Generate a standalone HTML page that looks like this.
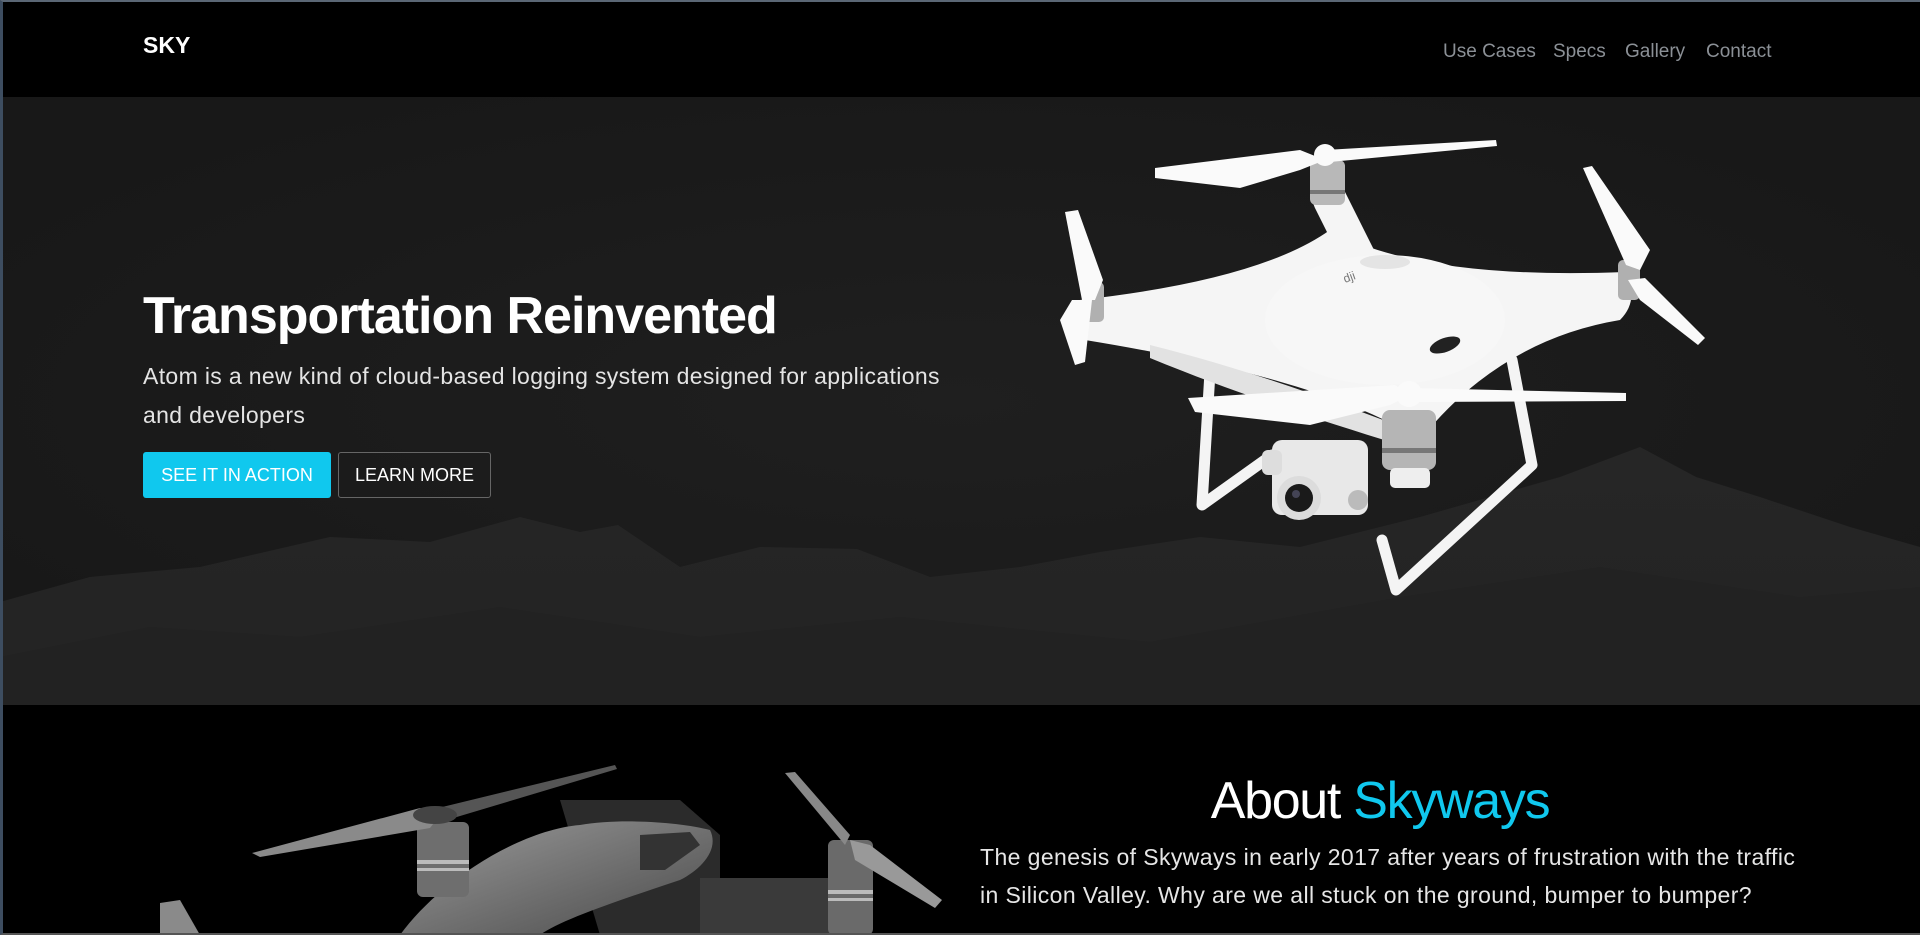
<!DOCTYPE html>
<html><head><meta charset="utf-8">
<style>
*{margin:0;padding:0;box-sizing:border-box}
html,body{width:1920px;height:935px;overflow:hidden;background:#000;font-family:"Liberation Sans",sans-serif}
#frame{position:absolute;left:0;top:0;width:1920px;height:935px;border-top:2px solid #5b6775;border-left:3px solid #3d4d60;border-bottom:2px solid #555}
nav{position:absolute;left:0;top:0;width:1920px;height:97px;background:#000}
.logo{position:absolute;left:143px;top:32px;color:#fff;font-weight:bold;font-size:23px}
.links{position:absolute;top:41px;font-size:19px;color:#8b9096}
.links span{position:absolute;white-space:nowrap}
.hero{position:absolute;left:0;top:97px;width:1920px;height:608px;background:#1b1b1b;overflow:hidden}
h1{position:absolute;left:143px;top:286px;color:#fff;font-size:52px;font-weight:bold;letter-spacing:-1px;white-space:nowrap}
.lead{position:absolute;left:143px;top:357px;width:900px;color:#e4e4e4;font-size:23px;line-height:39px;letter-spacing:0.35px;white-space:nowrap}
.btn{position:absolute;top:452px;height:46px;font-size:18px;line-height:46px;text-align:center;color:#fff;border-radius:3px}
.b1{left:143px;width:188px;background:#10c8ee}
.b2{left:338px;width:153px;border:1px solid #666;line-height:44px}
h2{position:absolute;left:1170px;width:420px;text-align:center;top:771px;font-size:52px;font-weight:normal;color:#fff;letter-spacing:-1.3px}
h2 b{color:#10c8ee;font-weight:normal}
.about{position:absolute;left:980px;top:838px;width:900px;color:#e6e6e6;font-size:23px;line-height:38px;letter-spacing:0.4px;white-space:nowrap}
</style></head><body>
<nav>
<div class="logo">SKY</div>
<div class="links"><span style="left:1443px">Use Cases</span><span style="left:1553px">Specs</span><span style="left:1625px">Gallery</span><span style="left:1706px">Contact</span></div>
</nav>
<div class="hero">
<svg width="1920" height="608" style="position:absolute;left:0;top:0">
<defs><linearGradient id="m" x1="0" y1="0" x2="0" y2="1"><stop offset="0" stop-color="#262626"/><stop offset="1" stop-color="#232323"/></linearGradient>
<radialGradient id="gl" cx="0.5" cy="0.5" r="0.6"><stop offset="0" stop-color="#1f1f1f"/><stop offset="1" stop-color="#181818"/></radialGradient></defs>
<rect width="1920" height="608" fill="url(#gl)"/>
<path d="M0 505 L90 480 L200 470 L330 440 L430 445 L520 420 L580 435 L618 428 L680 470 L760 450 L857 452 L930 480 L1020 470 L1100 455 L1200 440 L1300 450 L1420 420 L1560 380 L1640 350 L1696 380 L1760 400 L1850 430 L1920 450 L1920 608 L0 608Z" fill="url(#m)"/>
<path d="M0 560 L150 530 L300 540 L500 510 L700 540 L900 520 L1150 545 L1400 500 L1600 470 L1800 500 L1920 490 L1920 608 L0 608Z" fill="#212121" opacity="0.6"/>
</svg>
</div>
<h1>Transportation Reinvented</h1>
<div class="lead">Atom is a new kind of cloud-based logging system designed for applications<br>and developers</div>
<div class="btn b1">SEE IT IN ACTION</div>
<div class="btn b2">LEARN MORE</div>

<!-- white drone -->
<svg width="1920" height="935" style="position:absolute;left:0;top:0">
<g fill="none" stroke="#f4f4f4" stroke-width="11" stroke-linecap="round" stroke-linejoin="round">
<path d="M1210 372 L1202 505 L1272 455"/>
<path d="M1512 360 L1532 465 L1396 590 L1382 540"/>
</g>
<!-- body -->
<g stroke="#f5f5f5" stroke-linecap="round" fill="none">
<path d="M1330 200 L1360 260" stroke-width="34"/>
</g>
<path d="M1330 230 Q1420 280 1625 272 Q1640 300 1620 320 Q1500 340 1420 440 Q1330 380 1085 340 Q1070 320 1080 300 Q1260 280 1330 230Z" fill="#f5f5f5"/>
<ellipse cx="1385" cy="320" rx="120" ry="65" fill="#f7f7f7"/>
<path d="M1150 345 C1250 370 1330 400 1410 430 L1400 445 C1320 420 1240 395 1150 358Z" fill="#e2e2e2"/>
<ellipse cx="1385" cy="262" rx="25" ry="7" fill="#e4e4e4"/>
<text x="1345" y="283" font-size="12" fill="#777" font-family="Liberation Sans" transform="rotate(-20 1345 283)">dji</text>
<ellipse cx="1445" cy="345" rx="16" ry="7" fill="#222" transform="rotate(-20 1445 345)"/>
<!-- motors -->
<g>
<rect x="1310" y="160" width="35" height="45" rx="6" fill="#b8b8b8"/><rect x="1310" y="190" width="35" height="4" fill="#777"/>
<rect x="1082" y="282" width="22" height="40" rx="5" fill="#b0b0b0"/>
<rect x="1618" y="260" width="22" height="40" rx="5" fill="#b0b0b0"/>
<rect x="1382" y="410" width="54" height="60" rx="8" fill="#b5b5b5"/><rect x="1382" y="448" width="54" height="5" fill="#777"/>
<rect x="1390" y="468" width="40" height="20" rx="5" fill="#eee"/>
</g>
<!-- camera -->
<rect x="1272" y="440" width="96" height="75" rx="10" fill="#e8e8e8"/>
<rect x="1262" y="450" width="20" height="25" rx="6" fill="#ddd"/>
<circle cx="1299" cy="498" r="22" fill="#dcdcdc"/><circle cx="1299" cy="498" r="14" fill="#1a1a1a"/><circle cx="1296" cy="494" r="4" fill="#445"/>
<circle cx="1358" cy="500" r="10" fill="#bbb"/>
<!-- props -->
<g fill="#fafafa">
<path d="M1155 168 L1300 150 L1325 160 L1300 170 L1240 188 L1155 178Z"/>
<path d="M1325 150 L1496 140 L1497 146 L1330 162Z"/>
<circle cx="1325" cy="155" r="11"/>
<path d="M1065 212 L1078 210 L1103 280 L1095 300 L1082 300Z"/>
<path d="M1072 300 L1092 300 L1085 362 L1075 365 L1060 320Z"/>
<path d="M1583 168 L1592 166 L1650 250 L1640 270 L1626 265Z"/>
<path d="M1628 280 L1645 278 L1705 338 L1698 345 L1640 300Z"/>
<path d="M1188 398 L1395 385 L1410 395 L1390 405 L1310 425 L1195 412Z"/>
<path d="M1410 388 L1626 393 L1626 401 L1410 402Z"/>
<circle cx="1409" cy="394" r="13"/>
</g>
</svg>

<!-- gray drone -->
<svg width="1000" height="175" style="position:absolute;left:0;top:760px">
<defs><linearGradient id="g1" x1="0" y1="0" x2="1" y2="1"><stop offset="0" stop-color="#9a9a9a"/><stop offset="1" stop-color="#4a4a4a"/></linearGradient></defs>
<path d="M560 40 L680 40 L720 75 L720 120 L860 120 L860 175 L600 175Z" fill="#2b2b2b"/>
<path d="M400 175 C440 120 520 70 580 65 C620 58 680 62 710 70 C720 90 700 110 680 120 C620 140 560 160 540 175Z" fill="url(#g1)"/>
<path d="M640 75 L690 72 L700 85 L665 110 L640 110Z" fill="#333"/>
<path d="M700 118 L830 118 L840 175 L700 175Z" fill="#3a3a3a"/>
<rect x="417" y="62" width="52" height="75" rx="6" fill="#6e6e6e"/><rect x="417" y="100" width="52" height="4" fill="#bbb"/><rect x="417" y="108" width="52" height="3" fill="#bbb"/>
<rect x="828" y="80" width="45" height="95" rx="6" fill="#6a6a6a"/><rect x="828" y="130" width="45" height="4" fill="#bbb"/><rect x="828" y="138" width="45" height="3" fill="#bbb"/>
<path d="M252 93 L420 48 L440 55 L430 68 L260 97Z" fill="#8a8a8a"/>
<path d="M430 50 L615 5 L617 9 L440 62Z" fill="#555"/>
<ellipse cx="435" cy="55" rx="22" ry="9" fill="#444"/>
<path d="M785 13 L795 12 L850 75 L845 85Z" fill="#888"/>
<path d="M850 80 L870 85 L942 140 L935 148 L855 100Z" fill="#999"/>
<path d="M160 143 L180 140 L200 175 L160 175Z" fill="#8a8a8a"/>
</svg>

<h2>About <b>Skyways</b></h2>
<div class="about">The genesis of Skyways in early 2017 after years of frustration with the traffic<br>in Silicon Valley. Why are we all stuck on the ground, bumper to bumper?</div>
<div id="frame"></div>
</body></html>
